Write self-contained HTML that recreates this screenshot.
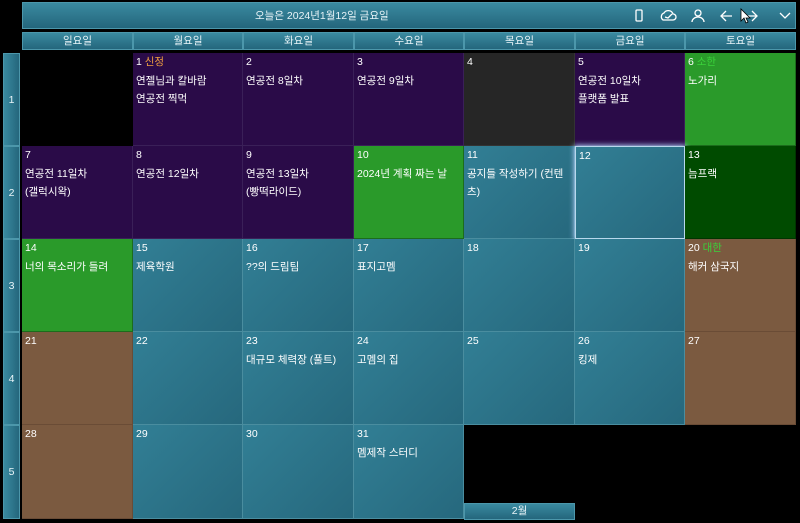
<!DOCTYPE html><html><head><meta charset="utf-8"><style>
body{margin:0;width:800px;height:523px;background:#000;position:relative;overflow:hidden;font-family:"Liberation Sans","Noto Sans CJK KR",sans-serif;color:#fff;font-size:10.5px}
.a{position:absolute;box-sizing:border-box}
.hd{background:linear-gradient(#3a8aa0,#24667c);border:1px solid #4c97ab;text-align:center;line-height:16px;color:#e8f4f8;font-size:10.5px}
.c{padding:3px 3px;line-height:18px;border-right:1px solid #4a8d9f;border-bottom:1px solid #4a8d9f}
.t{background:linear-gradient(135deg,#327f95,#26687d)}
.p{background:#2a0b48;border-color:#3a2058}
.g{background:#2a9a2a;border-color:#1c6c1c}
.dg{background:#004b00;border-color:#003500}
.br{background:#7b5a40;border-color:#6a4c36}
.k{background:#262626;border-color:#333}
.n{line-height:13px;margin-bottom:3px}
.rw{background:linear-gradient(90deg,#3a8aa0,#24667c);border:1px solid #4c97ab;text-align:center;color:#e8f4f8;padding-top:40px}
</style></head><body>
<div class="a" style="left:22px;top:2px;width:774px;height:27px;background:linear-gradient(#3a8aa0,#24667c);border:1px solid #4c97ab"></div>
<div class="a" style="left:255px;top:8px;font-size:10.5px;color:#e8f4f8">오늘은 2024년1월12일 금요일</div>
<svg class="a" style="left:630px;top:7px" width="165" height="18" fill="none" stroke="#fff" stroke-width="1.3">
<rect x="6" y="3" width="6" height="11" rx="1"/>
<path d="M33 13h10a3 3 0 0 0 0-6 5 5 0 0 0-9-1 4 4 0 0 0-1 7zM35 10l3 1 4-4"/>
<circle cx="68" cy="6" r="3"/><path d="M62 15a6 5 0 0 1 12 0"/>
<path d="M92 9h10M96 4l-5 5 5 5"/><path d="M116 9h10M122 4l5 5-5 5"/>
<path d="M150 6l5 5 5-5"/>
</svg>
<svg class="a" style="left:740px;top:8px" width="12" height="16"><path d="M1 1v12l3-3 2 5 2-1-2-4h4z" fill="#fff" stroke="#000" stroke-width=".8"/></svg>
<div class="a hd" style="left:22px;top:32px;width:111px;height:18px">일요일</div>
<div class="a hd" style="left:133px;top:32px;width:110px;height:18px">월요일</div>
<div class="a hd" style="left:243px;top:32px;width:111px;height:18px">화요일</div>
<div class="a hd" style="left:354px;top:32px;width:110px;height:18px">수요일</div>
<div class="a hd" style="left:464px;top:32px;width:111px;height:18px">목요일</div>
<div class="a hd" style="left:575px;top:32px;width:110px;height:18px">금요일</div>
<div class="a hd" style="left:685px;top:32px;width:111px;height:18px">토요일</div>
<div class="a rw" style="left:3px;top:53px;width:17px;height:93px">1</div>
<div class="a rw" style="left:3px;top:146px;width:17px;height:93px">2</div>
<div class="a rw" style="left:3px;top:239px;width:17px;height:93px">3</div>
<div class="a rw" style="left:3px;top:332px;width:17px;height:93px">4</div>
<div class="a rw" style="left:3px;top:425px;width:17px;height:94px">5</div>
<div class="a c p" style="left:133px;top:53px;width:110px;height:93px"><div class="n">1 <span style="color:#f0a040">신정</span></div>연젤님과 칼바람<br>연공전 찍먹</div>
<div class="a c p" style="left:243px;top:53px;width:111px;height:93px"><div class="n">2</div>연공전 8일차</div>
<div class="a c p" style="left:354px;top:53px;width:110px;height:93px"><div class="n">3</div>연공전 9일차</div>
<div class="a c k" style="left:464px;top:53px;width:111px;height:93px"><div class="n">4</div></div>
<div class="a c p" style="left:575px;top:53px;width:110px;height:93px"><div class="n">5</div>연공전 10일차<br>플랫폼 발표</div>
<div class="a c g" style="left:685px;top:53px;width:111px;height:93px"><div class="n">6 <span style="color:#3ad23a">소한</span></div>노가리</div>
<div class="a c p" style="left:22px;top:146px;width:111px;height:93px"><div class="n">7</div>연공전 11일차<br>(갤럭시왁)</div>
<div class="a c p" style="left:133px;top:146px;width:110px;height:93px"><div class="n">8</div>연공전 12일차</div>
<div class="a c p" style="left:243px;top:146px;width:111px;height:93px"><div class="n">9</div>연공전 13일차<br>(빵떡라이드)</div>
<div class="a c g" style="left:354px;top:146px;width:110px;height:93px"><div class="n">10</div>2024년 계획 짜는 날</div>
<div class="a c t" style="left:464px;top:146px;width:111px;height:93px"><div class="n">11</div>공지들 작성하기 (컨텐<br>츠)</div>
<div class="a c t" style="left:575px;top:146px;width:110px;height:93px;border:1px solid #b8d8ec;box-shadow:0 0 5px 1px #a8c8f0"><div class="n">12</div></div>
<div class="a c dg" style="left:685px;top:146px;width:111px;height:93px"><div class="n">13</div>늠프랙</div>
<div class="a c g" style="left:22px;top:239px;width:111px;height:93px"><div class="n">14</div>너의 목소리가 들려</div>
<div class="a c t" style="left:133px;top:239px;width:110px;height:93px"><div class="n">15</div>제육학원</div>
<div class="a c t" style="left:243px;top:239px;width:111px;height:93px"><div class="n">16</div>??의 드림팀</div>
<div class="a c t" style="left:354px;top:239px;width:110px;height:93px"><div class="n">17</div>표지고멤</div>
<div class="a c t" style="left:464px;top:239px;width:111px;height:93px"><div class="n">18</div></div>
<div class="a c t" style="left:575px;top:239px;width:110px;height:93px"><div class="n">19</div></div>
<div class="a c br" style="left:685px;top:239px;width:111px;height:93px"><div class="n">20 <span style="color:#3ad23a">대한</span></div>해커 삼국지</div>
<div class="a c br" style="left:22px;top:332px;width:111px;height:93px"><div class="n">21</div></div>
<div class="a c t" style="left:133px;top:332px;width:110px;height:93px"><div class="n">22</div></div>
<div class="a c t" style="left:243px;top:332px;width:111px;height:93px"><div class="n">23</div>대규모 체력장 (풀트)</div>
<div class="a c t" style="left:354px;top:332px;width:110px;height:93px"><div class="n">24</div>고멤의 집</div>
<div class="a c t" style="left:464px;top:332px;width:111px;height:93px"><div class="n">25</div></div>
<div class="a c t" style="left:575px;top:332px;width:110px;height:93px"><div class="n">26</div>킹제</div>
<div class="a c br" style="left:685px;top:332px;width:111px;height:93px"><div class="n">27</div></div>
<div class="a c br" style="left:22px;top:425px;width:111px;height:94px"><div class="n">28</div></div>
<div class="a c t" style="left:133px;top:425px;width:110px;height:94px"><div class="n">29</div></div>
<div class="a c t" style="left:243px;top:425px;width:111px;height:94px"><div class="n">30</div></div>
<div class="a c t" style="left:354px;top:425px;width:110px;height:94px"><div class="n">31</div>멤제작 스터디</div>
<div class="a hd" style="left:464px;top:503px;width:111px;height:17px;line-height:15px">2월</div>
</body></html>
